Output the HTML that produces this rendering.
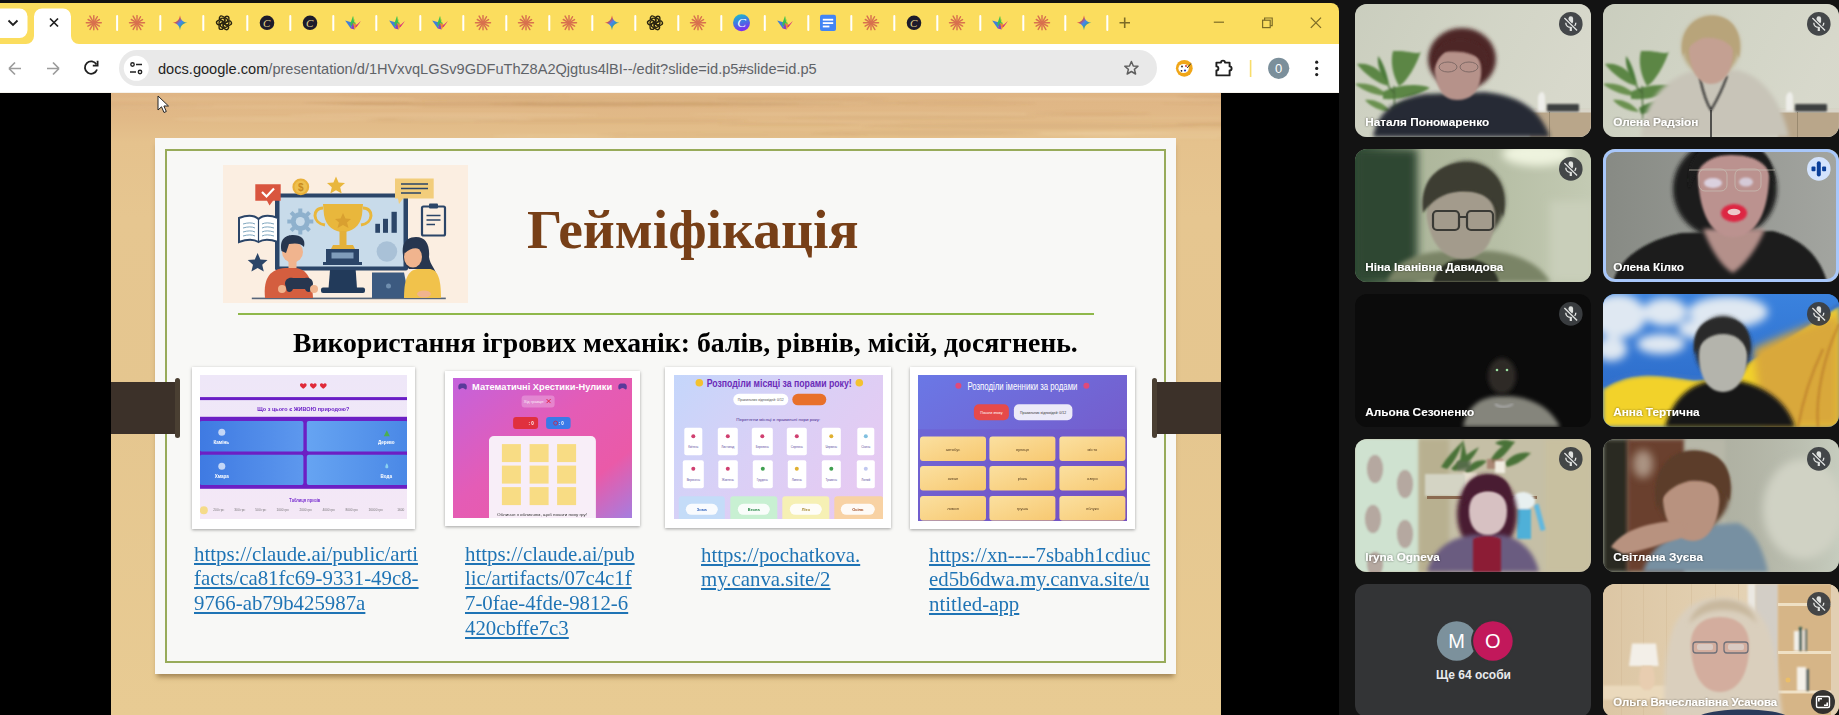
<!DOCTYPE html>
<html><head><meta charset="utf-8">
<style>
*{margin:0;padding:0;box-sizing:border-box}
html,body{width:1839px;height:715px;overflow:hidden;background:#131313;font-family:"Liberation Sans",sans-serif;position:relative}
.abs{position:absolute}
/* browser */
#browser{position:absolute;left:0;top:0;width:1339px;height:715px;background:#000;overflow:hidden}
#topblack{position:absolute;left:0;top:0;width:1339px;height:3px;background:#111}
#tabs{position:absolute;left:0;top:3px;width:1339px;height:41px;background:#fbdd5e;border-top-right-radius:10px}
#toolbar{position:absolute;left:0;top:44px;width:1339px;height:49px;background:#fff;border-bottom:1px solid #e8e3d8}
.sep{position:absolute;top:15px;width:2px;height:16px;background:#fff;border-radius:1px}
.ic{position:absolute;top:11px;width:20px;height:20px}
#omni{position:absolute;left:119px;top:6px;width:1037px;height:36px;border-radius:18px;background:#e9e9e9}
#url{position:absolute;left:158px;top:61px;font-size:14.6px;color:#5f6368;white-space:nowrap;letter-spacing:0}
#url b{font-weight:normal;color:#1f1f1f}
/* slide */
#slide{position:absolute;left:111px;top:93px;width:1110px;height:622px;overflow:hidden;
 background:linear-gradient(180deg,#dfb585 0%,#e1b987 4%,#e5c28d 8%,#e6c690 20%,#e5c68f 50%,#e8cb93 100%)}
#paper{position:absolute;left:44px;top:45px;width:1021px;height:536px;background:#f8f8f6;box-shadow:0 5px 5px -2px rgba(90,60,20,.5)}
#frame{position:absolute;left:10px;top:11px;width:1001px;height:514px;border:2px solid #98ab5a}
.clip{position:absolute;top:288px;width:69px;height:53px;background:#3c3129}
.thumb{position:absolute;background:#fff;box-shadow:0 1px 3px rgba(0,0,0,.35)}
.inner{position:absolute;overflow:hidden}
.link{position:absolute;font-family:"Liberation Serif",serif;font-size:20.85px;line-height:24.8px;color:#1f74b5;text-decoration:underline;text-decoration-thickness:1.5px;text-underline-offset:2px;white-space:nowrap}
/* meet tiles */
.tile{position:absolute;width:236px;height:133px;border-radius:10px;overflow:hidden}
.name{position:absolute;left:10px;bottom:10px;color:#fff;font-weight:bold;font-size:12.5px;text-shadow:0 0 3px rgba(0,0,0,.6);white-space:nowrap}
.mute{position:absolute;right:9px;top:7px;width:26px;height:26px;border-radius:50%;background:rgba(60,64,67,.85)}
</style></head><body>
<div id="browser">
 <!--CHROME--><svg class="abs" style="left:0;top:0" width="1339" height="93" viewBox="0 0 1339 93">
<defs>
<linearGradient id="gem" x1="0" y1="0" x2="1" y2="1"><stop offset="0" stop-color="#f0a030"/><stop offset=".3" stop-color="#e94235"/><stop offset=".5" stop-color="#4285f4"/><stop offset=".8" stop-color="#34a853"/></linearGradient>
<linearGradient id="cva" x1="0" y1="0" x2="0.3" y2="1"><stop offset="0" stop-color="#18c3c9"/><stop offset=".5" stop-color="#3c7fe0"/><stop offset="1" stop-color="#7b2ff0"/></linearGradient>
<g id="iA" stroke="#d8714e" stroke-width="1.45" stroke-linecap="round"><line x1="0" y1="0" x2="7.50" y2="0.00"/><line x1="0" y1="0" x2="5.63" y2="3.25"/><line x1="0" y1="0" x2="3.90" y2="6.75"/><line x1="0" y1="0" x2="0.00" y2="7.00"/><line x1="0" y1="0" x2="-3.80" y2="6.58"/><line x1="0" y1="0" x2="-5.89" y2="3.40"/><line x1="0" y1="0" x2="-7.50" y2="0.00"/><line x1="0" y1="0" x2="-5.72" y2="-3.30"/><line x1="0" y1="0" x2="-3.90" y2="-6.75"/><line x1="0" y1="0" x2="-0.00" y2="-7.20"/><line x1="0" y1="0" x2="3.50" y2="-6.06"/><line x1="0" y1="0" x2="5.54" y2="-3.20"/></g>
<path id="iG" d="M0,-7.5 C0.8,-2.5 2.5,-0.8 7.5,0 C2.5,0.8 0.8,2.5 0,7.5 C-0.8,2.5 -2.5,0.8 -7.5,0 C-2.5,-0.8 -0.8,-2.5 0,-7.5Z" fill="url(#gem)"/>
<g id="iO" fill="none" stroke="#2a2410" stroke-width="1.35"><rect x="0.9" y="-6.6" width="4" height="8.8" rx="2" transform="rotate(0)"/><rect x="0.9" y="-6.6" width="4" height="8.8" rx="2" transform="rotate(60)"/><rect x="0.9" y="-6.6" width="4" height="8.8" rx="2" transform="rotate(120)"/><rect x="0.9" y="-6.6" width="4" height="8.8" rx="2" transform="rotate(180)"/><rect x="0.9" y="-6.6" width="4" height="8.8" rx="2" transform="rotate(240)"/><rect x="0.9" y="-6.6" width="4" height="8.8" rx="2" transform="rotate(300)"/></g>
<g id="iC"><circle r="7.3" fill="#1d1b2b"/><text x="-0.3" y="4" font-family="Liberation Serif" font-style="italic" font-size="11" fill="#e8d890" text-anchor="middle">C</text></g>
<g id="iK" transform="scale(1.12)"><path d="M-7,-2 L-2,5 L0,0Z" fill="#3f7fd8"/><path d="M0,-6 L-2.5,1 L0,5 L2.5,1Z" fill="#38c050"/><path d="M0,-6 L2.5,1 L1,-1Z" fill="#f0e040"/><path d="M-2,5 L0,0 L1.5,6Z" fill="#8a40c0"/><path d="M1.5,6 L0,0 L4,2Z" fill="#f08a30"/><path d="M2,3 L7,-1.5 L6,0 L3,4Z" fill="#d83080"/></g>
<g id="iV"><circle r="8.5" fill="url(#cva)"/><text x="0" y="4.5" font-family="Liberation Serif" font-style="italic" font-size="13" fill="#fff" text-anchor="middle">C</text></g>
<g id="iD"><rect x="-8" y="-8" width="16" height="16.3" rx="2" fill="#4285f4"/><rect x="-5.2" y="-4" width="10.4" height="1.8" fill="#fff"/><rect x="-5.2" y="-0.6" width="10.4" height="1.8" fill="#fff"/><rect x="-5.2" y="2.8" width="6.6" height="1.8" fill="#fff"/></g>
</defs>
<rect x="0" y="0" width="1339" height="93" fill="#111"/>
<path d="M0,3 H1331 A8,8 0 0 1 1339,11 V93 H0Z" fill="#fbdd5e"/>
<rect x="0" y="44" width="1339" height="49" fill="#fff"/>
<rect x="0" y="92.5" width="1339" height="1" fill="#ece6da"/>
<rect x="-10" y="8.5" width="37.5" height="29.5" rx="8" fill="#fff"/>
<path d="M8.5,20.5 L13,25 L17.5,20.5" fill="none" stroke="#1f1f1f" stroke-width="1.8"/>
<path d="M26,44 A8,8 0 0 0 34,36 V16.5 A8,8 0 0 1 42,8.5 H63 A8,8 0 0 1 71,16.5 V36 A8,8 0 0 0 79,44Z" fill="#fff"/>
<path d="M50,18.5 L58,26.5 M58,18.5 L50,26.5" stroke="#1f1f1f" stroke-width="1.7"/>
<rect x="116.1" y="15" width="2" height="16" rx="1" fill="#fff"/><rect x="159.3" y="15" width="2" height="16" rx="1" fill="#fff"/><rect x="202.3" y="15" width="2" height="16" rx="1" fill="#fff"/><rect x="246.3" y="15" width="2" height="16" rx="1" fill="#fff"/><rect x="289.3" y="15" width="2" height="16" rx="1" fill="#fff"/><rect x="332.3" y="15" width="2" height="16" rx="1" fill="#fff"/><rect x="375.3" y="15" width="2" height="16" rx="1" fill="#fff"/><rect x="419.3" y="15" width="2" height="16" rx="1" fill="#fff"/><rect x="462.3" y="15" width="2" height="16" rx="1" fill="#fff"/><rect x="505.3" y="15" width="2" height="16" rx="1" fill="#fff"/><rect x="548.3" y="15" width="2" height="16" rx="1" fill="#fff"/><rect x="591.3" y="15" width="2" height="16" rx="1" fill="#fff"/><rect x="634.3" y="15" width="2" height="16" rx="1" fill="#fff"/><rect x="677.3" y="15" width="2" height="16" rx="1" fill="#fff"/><rect x="720.3" y="15" width="2" height="16" rx="1" fill="#fff"/><rect x="763.8" y="15" width="2" height="16" rx="1" fill="#fff"/><rect x="807.3" y="15" width="2" height="16" rx="1" fill="#fff"/><rect x="850.3" y="15" width="2" height="16" rx="1" fill="#fff"/><rect x="893.3" y="15" width="2" height="16" rx="1" fill="#fff"/><rect x="936.3" y="15" width="2" height="16" rx="1" fill="#fff"/><rect x="979.3" y="15" width="2" height="16" rx="1" fill="#fff"/><rect x="1022.3" y="15" width="2" height="16" rx="1" fill="#fff"/><rect x="1064.3" y="15" width="2" height="16" rx="1" fill="#fff"/><rect x="1106.3" y="15" width="2" height="16" rx="1" fill="#fff"/>
<use href="#iA" x="93.8" y="22.8"/><use href="#iA" x="137" y="22.8"/><use href="#iG" x="180" y="22.8"/><use href="#iO" x="224" y="22.8"/><use href="#iC" x="267" y="22.8"/><use href="#iC" x="310" y="22.8"/><use href="#iK" x="353" y="22.8"/><use href="#iK" x="397" y="22.8"/><use href="#iK" x="440" y="22.8"/><use href="#iA" x="483" y="22.8"/><use href="#iA" x="526" y="22.8"/><use href="#iA" x="569" y="22.8"/><use href="#iG" x="612" y="22.8"/><use href="#iO" x="655" y="22.8"/><use href="#iA" x="698" y="22.8"/><use href="#iV" x="741.5" y="22.8"/><use href="#iK" x="785" y="22.8"/><use href="#iD" x="828" y="22.8"/><use href="#iA" x="871" y="22.8"/><use href="#iC" x="914" y="22.8"/><use href="#iA" x="957" y="22.8"/><use href="#iK" x="1000" y="22.8"/><use href="#iA" x="1042" y="22.8"/><use href="#iG" x="1084" y="22.8"/>
<path d="M1119.5,22.8 H1130 M1124.7,17.5 V28" stroke="#7d6c26" stroke-width="1.6"/>
<path d="M1213.8,22.2 H1224" stroke="#7d6c26" stroke-width="1.2"/>
<rect x="1262.6" y="20.2" width="7.6" height="7.4" fill="none" stroke="#7d6c26" stroke-width="1.2"/>
<path d="M1264.6,20.2 V18 H1272.2 V25.6 H1270.2" fill="none" stroke="#7d6c26" stroke-width="1.2"/>
<path d="M1310.8,17.6 L1321,27.9 M1321,17.6 L1310.8,27.9" stroke="#7d6c26" stroke-width="1.3"/>
<rect x="119" y="50" width="1038" height="36" rx="18" fill="#e9e9e9"/>
<circle cx="136.3" cy="68.3" r="12.5" fill="#fff"/>
<path d="M9,68.5 H21 M9,68.5 L15,62.5 M9,68.5 L15,74.5" fill="none" stroke="#9c9c9c" stroke-width="1.7" transform="translate(0,-0)"/>
<path d="M47,68.5 H59 M59,68.5 L53,62.5 M59,68.5 L53,74.5" fill="none" stroke="#9c9c9c" stroke-width="1.7"/>
<path d="M96.5,64.5 A6.2,6.2 0 1 0 97,69.5" fill="none" stroke="#1f1f1f" stroke-width="1.8"/>
<path d="M97.6,60.8 V65.6 H92.8" fill="none" stroke="#1f1f1f" stroke-width="1.8"/>
<circle cx="132.5" cy="64.5" r="1.7" fill="none" stroke="#222" stroke-width="1.4"/>
<path d="M136,64.5 H142 M130,72 H136" stroke="#222" stroke-width="1.5"/>
<circle cx="140" cy="72" r="1.7" fill="none" stroke="#222" stroke-width="1.4"/>
<path d="M1131.4,61.5 L1133.3,66 L1138,66.3 L1134.4,69.4 L1135.6,74 L1131.4,71.5 L1127.2,74 L1128.4,69.4 L1124.8,66.3 L1129.5,66Z" fill="none" stroke="#5f5f5f" stroke-width="1.5" stroke-linejoin="round"/>
<circle cx="1184.3" cy="68.3" r="8.4" fill="#f0a618"/>
<ellipse cx="1183.6" cy="68.5" rx="5.2" ry="4.6" fill="#fff"/>
<circle cx="1182" cy="66.5" r="1" fill="#333"/><circle cx="1185" cy="70.5" r="1.1" fill="#2040c0"/><circle cx="1181.5" cy="70.8" r="0.9" fill="#222"/><circle cx="1186" cy="66" r="0.9" fill="#d02020"/>
<path d="M1187,68 L1191,63.5" stroke="#333" stroke-width="1"/>
<path d="M1216.4,62.6 H1221 A2,2 0 0 1 1225,62.6 H1229.6 V66.4 A2,2 0 0 1 1229.6,70.4 V75.4 H1216.4 V70.4 A2,2 0 0 0 1216.4,66.4Z" fill="none" stroke="#1f1f1f" stroke-width="1.9" stroke-linejoin="round"/>
<rect x="1249.8" y="60" width="1.6" height="17" fill="#f8dd6a"/>
<circle cx="1278.7" cy="68.3" r="10.6" fill="#7b8f9b"/>
<text x="1278.7" y="73" font-family="Liberation Sans" font-size="13" fill="#fff" text-anchor="middle">0</text>
<circle cx="1316.7" cy="62.2" r="1.6" fill="#1f1f1f"/><circle cx="1316.7" cy="68.4" r="1.6" fill="#1f1f1f"/><circle cx="1316.7" cy="74.6" r="1.6" fill="#1f1f1f"/>
</svg>
 <div id="url"><b>docs.google.com</b>/presentation/d/1HVxvqLGSv9GDFuThZ8A2Qjgtus4lBI--/edit?slide=id.p5#slide=id.p5</div>
 <svg class="abs" style="left:157px;top:95px;z-index:5" width="14" height="20" viewBox="0 0 14 20"><path d="M1,1 L1,15 L4.5,11.8 L7,17.5 L9.3,16.5 L6.9,11 L11.5,11Z" fill="#fff" stroke="#222" stroke-width="1"/></svg>
<!--/CHROME-->
 <div id="slide">
  <svg class="abs" style="left:0;top:0" width="1110" height="622"><defs><filter id="wb"><feGaussianBlur stdDeviation="1"/></filter></defs><g filter="url(#wb)"><ellipse cx="766" cy="21" rx="189" ry="2.0" fill="#fff0d0" opacity="0.09"/><ellipse cx="664" cy="10" rx="144" ry="2.6" fill="#b07a40" opacity="0.07"/><ellipse cx="1034" cy="6" rx="154" ry="1.3" fill="#fff0d0" opacity="0.12"/><ellipse cx="718" cy="29" rx="74" ry="1.2" fill="#fff0d0" opacity="0.05"/><ellipse cx="247" cy="10" rx="55" ry="2.0" fill="#b07a40" opacity="0.11"/><ellipse cx="800" cy="24" rx="125" ry="2.4" fill="#b07a40" opacity="0.07"/><ellipse cx="1281" cy="44" rx="176" ry="2.5" fill="#b07a40" opacity="0.07"/><ellipse cx="150" cy="14" rx="165" ry="1.9" fill="#fff0d0" opacity="0.08"/><ellipse cx="975" cy="42" rx="50" ry="1.6" fill="#fff0d0" opacity="0.08"/><ellipse cx="442" cy="43" rx="61" ry="2.3" fill="#fff0d0" opacity="0.07"/><ellipse cx="497" cy="6" rx="195" ry="2.6" fill="#b07a40" opacity="0.07"/><ellipse cx="142" cy="6" rx="170" ry="1.5" fill="#fff0d0" opacity="0.08"/><ellipse cx="855" cy="10" rx="70" ry="2.4" fill="#b07a40" opacity="0.08"/><ellipse cx="422" cy="11" rx="196" ry="2.6" fill="#b07a40" opacity="0.11"/><ellipse cx="555" cy="11" rx="178" ry="2.4" fill="#b07a40" opacity="0.12"/><ellipse cx="378" cy="11" rx="166" ry="1.8" fill="#b07a40" opacity="0.06"/><ellipse cx="692" cy="6" rx="86" ry="2.3" fill="#b07a40" opacity="0.08"/><ellipse cx="621" cy="42" rx="136" ry="2.8" fill="#b07a40" opacity="0.06"/><ellipse cx="977" cy="40" rx="87" ry="1.5" fill="#fff0d0" opacity="0.12"/><ellipse cx="1232" cy="10" rx="182" ry="2.3" fill="#b07a40" opacity="0.06"/><ellipse cx="1151" cy="4" rx="86" ry="2.5" fill="#b07a40" opacity="0.11"/><ellipse cx="331" cy="27" rx="76" ry="2.5" fill="#b07a40" opacity="0.07"/><ellipse cx="1074" cy="25" rx="142" ry="1.7" fill="#fff0d0" opacity="0.06"/><ellipse cx="343" cy="3" rx="117" ry="1.3" fill="#b07a40" opacity="0.08"/><ellipse cx="164" cy="26" rx="104" ry="2.8" fill="#fff0d0" opacity="0.10"/><ellipse cx="678" cy="31" rx="71" ry="1.3" fill="#b07a40" opacity="0.11"/><ellipse cx="1118" cy="31" rx="53" ry="2.3" fill="#b07a40" opacity="0.10"/><ellipse cx="1171" cy="15" rx="61" ry="2.2" fill="#fff0d0" opacity="0.11"/><ellipse cx="920" cy="33" rx="169" ry="2.8" fill="#b07a40" opacity="0.10"/><ellipse cx="1067" cy="40" rx="113" ry="2.6" fill="#fff0d0" opacity="0.09"/><ellipse cx="500" cy="28" rx="137" ry="2.3" fill="#b07a40" opacity="0.09"/><ellipse cx="1124" cy="44" rx="159" ry="1.9" fill="#fff0d0" opacity="0.09"/><ellipse cx="977" cy="21" rx="63" ry="2.6" fill="#b07a40" opacity="0.09"/><ellipse cx="333" cy="22" rx="155" ry="2.1" fill="#fff0d0" opacity="0.11"/><ellipse cx="9" cy="13" rx="95" ry="2.4" fill="#b07a40" opacity="0.06"/><ellipse cx="815" cy="40" rx="116" ry="2.8" fill="#b07a40" opacity="0.10"/><ellipse cx="592" cy="10" rx="171" ry="2.8" fill="#fff0d0" opacity="0.08"/><ellipse cx="353" cy="26" rx="70" ry="2.1" fill="#fff0d0" opacity="0.11"/><ellipse cx="1141" cy="32" rx="92" ry="1.5" fill="#b07a40" opacity="0.07"/><ellipse cx="545" cy="11" rx="144" ry="2.1" fill="#b07a40" opacity="0.11"/></g></svg>
  <div id="paper">
   <div id="frame"></div>
  </div>

  <svg class="abs" style="left:111.7px;top:72.4px" width="245" height="138" viewBox="0 0 245 138">
<rect width="245" height="138" fill="#fbeee1"/>
<rect x="28.8" y="132.6" width="194" height="1.6" fill="#56657a"/>
<rect x="52" y="28.4" width="133" height="77" rx="2" fill="#2b4568"/>
<rect x="56.5" y="32.5" width="124" height="69" fill="#c8dbea"/>
<path d="M107,105 H132.7 L134,123.5 H105.5Z" fill="#223a5a"/>
<rect x="98" y="122.5" width="44" height="5.5" rx="2" fill="#223a5a"/>
<g fill="#8fb1cd"><circle cx="77.3" cy="56.5" r="9.5"/><g stroke="#8fb1cd" stroke-width="4"><path d="M77.3,43.5 V69.5 M64.3,56.5 H90.3 M68.1,47.3 L86.5,65.7 M86.5,47.3 L68.1,65.7"/></g><circle cx="77.3" cy="56.5" r="4.5" fill="#c8dbea"/></g>
<path d="M100,39 H140 L139,50 C137,62 128,67 120,67 C112,67 103,62 101,50Z" fill="#e9b73c"/>
<path d="M100,43 C89,43 89,58 102,60 M140,43 C151,43 151,58 138,60" fill="none" stroke="#e9b73c" stroke-width="3"/>
<path d="M120,48 L122.5,53.5 L128,54 L124,57.5 L125.5,63 L120,60 L114.5,63 L116,57.5 L112,54 L117.5,53.5Z" fill="#d9a030"/>
<rect x="116.5" y="66" width="7" height="14" fill="#e4b13a"/>
<path d="M110,80 H130 L132,84 H108Z" fill="#e4b13a"/>
<rect x="103" y="84" width="33" height="14" fill="#2b4568"/>
<rect x="108.5" y="87.5" width="22" height="6" fill="#7f9cba"/>
<rect x="100" y="97" width="39" height="3" fill="#2b4568"/>
<g fill="#2b4568"><rect x="152.3" y="58.8" width="4.7" height="9"/><rect x="160" y="53.8" width="5" height="14"/><rect x="168.5" y="46.8" width="5.3" height="21"/></g>
<circle cx="163.9" cy="86.5" r="10.3" fill="#a9c1d7"/>
<path d="M32.3,19.2 H57.7 V35.8 H50 L46.5,40.5 L44,35.8 H32.3Z" fill="#d9553f" transform="translate(0,0)"/>
<path d="M39,27 L43.5,31.5 L51,23.5" fill="none" stroke="#fff" stroke-width="2.2"/>
<circle cx="77.8" cy="21.9" r="8.4" fill="#e8b03a"/><circle cx="77.8" cy="21.9" r="6.3" fill="#eec04f"/>
<text x="77.8" y="26" font-family="Liberation Sans" font-size="10" font-weight="bold" fill="#c88a20" text-anchor="middle">$</text>
<path d="M113,11.5 L115.6,17.5 L122,18 L117.2,22.2 L118.7,28.5 L113,25.2 L107.3,28.5 L108.8,22.2 L104,18 L110.4,17.5Z" fill="#e9b73c"/>
<path d="M172,13.4 H210.7 V33.5 H180 L176,39 L175,33.5 H172Z" fill="#f2cd7b"/>
<g stroke="#2b4568" stroke-width="1.3"><path d="M178,19 H205 M178,23.5 H205 M178,28 H198"/></g>
<rect x="199" y="41.5" width="23" height="29" rx="1.5" fill="#fbeee1" stroke="#2b4568" stroke-width="2.2"/>
<rect x="206" y="38.5" width="9" height="5" rx="1" fill="#2b4568"/>
<g stroke="#2b4568" stroke-width="1.4"><path d="M203.5,50.5 H217.5 M203.5,55 H217.5 M203.5,59.5 H212"/></g>
<path d="M16,53 C24,50 31,50 35.5,54 C40,50 47,50 55,53 V77 C47,74 40,74 35.5,77 C31,74 24,74 16,77Z" fill="#fff" stroke="#2b4568" stroke-width="2"/>
<path d="M35.5,54 V77" stroke="#2b4568" stroke-width="1.2"/>
<g stroke="#6f9bb5" stroke-width="0.9" fill="none"><path d="M20,59 C25,57.5 29,57.5 32,59 M20,63 C25,61.5 29,61.5 32,63 M20,67 C25,65.5 29,65.5 32,67 M20,71 C25,69.5 29,69.5 32,71 M39,59 C42,57.5 46,57.5 51,59 M39,63 C42,61.5 46,61.5 51,63 M39,67 C42,65.5 46,65.5 51,67 M39,71 C42,69.5 46,69.5 51,71"/></g>
<path d="M34.6,88 L37.4,94.5 L44.5,95 L39.2,99.8 L40.8,106.6 L34.6,103 L28.4,106.6 L30,99.8 L24.7,95 L31.8,94.5Z" fill="#2b4568"/>
<path d="M42,133 C40,112 48,104 62,103 H72 C84,104 89,113 90,133Z" fill="#d45e3f"/>
<circle cx="69.5" cy="87" r="10.5" fill="#f0b48e"/>
<rect x="65.5" y="95" width="8" height="8" fill="#f0b48e"/>
<path d="M58.5,86 C56,73 64,70 70,70 C78,70 83,74 81,82 C78,78 72,78 66,79 L63,88Z" fill="#27364f"/>
<path d="M62,119 C62,114 66,112 70,113 H82 C86,112 90,114 90,119 L88,126 C86,128 83,127 82,124 H70 C69,127 66,128 64,126Z" fill="#27364f"/>
<circle cx="59" cy="124" r="4" fill="#f0b48e"/><circle cx="91" cy="124" r="4" fill="#f0b48e"/>
<path d="M149,107.5 H181 L186,133 H149Z" fill="#3c5a80"/>
<circle cx="165.5" cy="121" r="2.5" fill="#6f8eae"/>
<path d="M180,90 C178,77 185,72 193,72 C203,72 207,80 206,92 C207,100 213,104 214,112 C206,111 201,108 199,104 L186,104 C182,100 180,96 180,90Z" fill="#27364f"/>
<path d="M181,133 C181,112 186,104 196,104 H206 C214,104 218,112 218,133Z" fill="#f1c24b"/>
<ellipse cx="190" cy="92" rx="9" ry="10.5" fill="#f0b48e"/>
<path d="M181,86 C181,77 188,73 195,75 C200,77 202,82 201,86 C195,82 188,82 182,88Z" fill="#27364f"/>
<ellipse cx="201" cy="129" rx="7" ry="3.5" fill="#f0b48e"/>
</svg>

  <div class="abs" id="title" style="left:416px;top:106px;font-family:'Liberation Serif',serif;font-weight:bold;font-size:55.6px;line-height:60px;color:#773f17;white-space:nowrap">Гейміфікація</div>
  <div class="abs" style="left:127px;top:220px;width:856px;height:2px;background:#8fb84a"></div>
  <div class="abs" id="sub" style="left:182px;top:234px;font-family:'Liberation Serif',serif;font-weight:bold;font-size:27.74px;line-height:32px;color:#000;white-space:nowrap">Використання ігрових механік: балів, рівнів, місій, досягнень.</div>
  <div class="clip" style="left:0;top:288.7px;width:68.7px;height:52.5px"></div><div class="abs" style="left:64px;top:285px;width:5px;height:60px;border-radius:2.5px;background:#4a3f32"></div>
  <div class="clip" style="left:1041px;top:288.7px;width:69px;height:52.5px"></div><div class="abs" style="left:1040.5px;top:285px;width:5px;height:60px;border-radius:2.5px;background:#4a3f32"></div>
  <div class="thumb" style="left:80.8px;top:274.3px;width:223px;height:161.4px"></div>
  <svg class="abs" style="left:89.2px;top:281.7px" width="206.8" height="144.3" viewBox="200.2 374.7 206.8 144.3">
   <defs><linearGradient id="t1b" x1="0" y1="0" x2="1" y2="0"><stop offset="0" stop-color="#3f7ae2"/><stop offset="1" stop-color="#5d98ee"/></linearGradient><linearGradient id="t1c" x1="0" y1="0" x2="1" y2="0"><stop offset="0" stop-color="#66a4f2"/><stop offset="1" stop-color="#4a88e6"/></linearGradient>
   <linearGradient id="t1bg" x1="0" y1="0" x2="0" y2="1"><stop offset="0" stop-color="#eee7f8"/><stop offset="1" stop-color="#f4e8f6"/></linearGradient></defs>
   <rect x="200" y="374" width="208" height="146" fill="url(#t1bg)"/>
   <g fill="#e02a3a"><path d="M300.5,384 c-1.2,-1.8 -3.6,-1 -3.3,0.9 c0.2,1.3 1.8,2.5 3.3,3.6 c1.5,-1.1 3.1,-2.3 3.3,-3.6 c0.3,-1.9 -2.1,-2.7 -3.3,-0.9z" transform="translate(3,0) scale(1)"/><path d="M300.5,384 c-1.2,-1.8 -3.6,-1 -3.3,0.9 c0.2,1.3 1.8,2.5 3.3,3.6 c1.5,-1.1 3.1,-2.3 3.3,-3.6 c0.3,-1.9 -2.1,-2.7 -3.3,-0.9z" transform="translate(13,0)"/><path d="M300.5,384 c-1.2,-1.8 -3.6,-1 -3.3,0.9 c0.2,1.3 1.8,2.5 3.3,3.6 c1.5,-1.1 3.1,-2.3 3.3,-3.6 c0.3,-1.9 -2.1,-2.7 -3.3,-0.9z" transform="translate(23,0)"/></g>
   <rect x="200" y="396.8" width="208" height="3" fill="#6a1ec6"/>
   <text x="303.5" y="410.5" font-family="Liberation Sans" font-weight="bold" font-size="5" fill="#6a1ec6" text-anchor="middle" textLength="92" lengthAdjust="spacingAndGlyphs">Що з цього є ЖИВОЮ природою?</text>
   <rect x="200" y="416.5" width="208" height="72" fill="#6c1fc4"/>
   <rect x="200" y="420.6" width="103.6" height="30.6" rx="2" fill="url(#t1b)"/>
   <rect x="307" y="420.6" width="101" height="30.6" rx="2" fill="url(#t1c)"/>
   <rect x="200" y="454.5" width="103.6" height="30.2" rx="2" fill="url(#t1b)"/>
   <rect x="307" y="454.5" width="101" height="30.2" rx="2" fill="url(#t1c)"/>
   <g font-family="Liberation Sans" font-weight="bold" font-size="4.6" fill="#fff" text-anchor="middle"><text x="221.5" y="444">Камінь</text><text x="386.5" y="444">Дерево</text><text x="222" y="477.5">Хмара</text><text x="386.5" y="477.5">Вода</text></g><g fill="#fff" opacity=".85">
   <circle cx="222" cy="432" r="3.5" opacity=".8"/><circle cx="222" cy="466" r="3.5" opacity=".8"/></g>
   <path d="M387,430 L390,436 H384Z" fill="#4caf50"/><path d="M387,463 C385,466 385,468 387,468 C389,468 389,466 387,463Z" fill="#8ad0f0"/>
   <text x="305" y="501.5" font-family="Liberation Sans" font-weight="bold" font-size="4.5" fill="#7a30d0" text-anchor="middle" textLength="31" lengthAdjust="spacingAndGlyphs">Таблиця призів</text>
   <circle cx="204" cy="510" r="4" fill="#f5d76e" opacity=".8"/>
   <g font-family="Liberation Sans" font-size="3.2" fill="#555" opacity=".8" text-anchor="middle"><text x="219" y="511">200 грн</text><text x="240" y="511">300 грн</text><text x="261" y="511">500 грн</text><text x="283" y="511">1000 грн</text><text x="306" y="511">2000 грн</text><text x="329" y="511">4000 грн</text><text x="352" y="511">8000 грн</text><text x="376" y="511">16000 грн</text><text x="401" y="511">1600</text></g>
  </svg>

  <div class="thumb" style="left:334.3px;top:278px;width:194.7px;height:155.4px"></div>
  <svg class="abs" style="left:342.4px;top:285.4px" width="178.6" height="139.6" viewBox="453.4 378.4 178.6 139.6">
   <defs><linearGradient id="t2g" x1="0" y1="0" x2="1" y2="1"><stop offset="0" stop-color="#c462dc"/><stop offset=".45" stop-color="#e45cb6"/><stop offset=".75" stop-color="#ea5aa8"/><stop offset="1" stop-color="#a47ee0"/></linearGradient></defs>
   <rect x="453" y="378" width="180" height="141" fill="url(#t2g)"/>
   <g fill="#5a3a9a"><path d="M459,389.5 C458,385 460,383.5 463,384 C466,383.5 468,385 467,389.5 C466,390.5 465,389 463,388.5 C461,389 460,390.5 459,389.5Z"/><path d="M619,389.5 C618,385 620,383.5 623,384 C626,383.5 628,385 627,389.5 C626,390.5 625,389 623,388.5 C621,389 620,390.5 619,389.5Z"/></g>
   <text x="542.5" y="390.5" font-family="Liberation Sans" font-weight="bold" font-size="9.2" fill="#fff" text-anchor="middle" textLength="140" lengthAdjust="spacingAndGlyphs">Математичні Хрестики-Нулики</text>
   <rect x="522" y="396" width="33" height="12" rx="3" fill="#fff" opacity=".25"/>
   <text x="534.5" y="403.4" font-family="Liberation Sans" font-size="4" fill="#fff" opacity=".85" text-anchor="middle">Хід гравця:</text><path d="M547,399.5 L551,403.5 M551,399.5 L547,403.5" stroke="#e02040" stroke-width="1"/>
   <rect x="513.5" y="417.5" width="25" height="12" rx="3" fill="#e0303e"/><text x="529" y="425.5" font-family="Liberation Sans" font-weight="bold" font-size="4.5" fill="#fff">: 0</text>
   <rect x="546.5" y="417.5" width="24.5" height="12" rx="3" fill="#3a7ae8"/><circle cx="556" cy="423.5" r="2" fill="none" stroke="#d02040" stroke-width=".8"/><text x="559" y="425.5" font-family="Liberation Sans" font-weight="bold" font-size="4.5" fill="#fff">: 0</text>
   <rect x="489.3" y="436.4" width="107" height="90" rx="5" fill="#f8eef8"/>
   <g fill="#f8dc84"><rect x="502.3" y="444.5" width="19" height="18"/><rect x="530" y="444.5" width="19" height="18"/><rect x="557.5" y="444.5" width="19" height="18"/>
   <rect x="502.3" y="466" width="19" height="18"/><rect x="530" y="466" width="19" height="18"/><rect x="557.5" y="466" width="19" height="18"/>
   <rect x="502.3" y="487.5" width="19" height="18"/><rect x="530" y="487.5" width="19" height="18"/><rect x="557.5" y="487.5" width="19" height="18"/></g>
   <text x="542.5" y="516.5" font-family="Liberation Sans" font-size="3.6" fill="#333" text-anchor="middle" textLength="90" lengthAdjust="spacingAndGlyphs">Обличчя з обличчям, щоб почати нову гру!</text>
  </svg>

  <div class="thumb" style="left:554.4px;top:274.3px;width:225.8px;height:161px"></div>
  <svg class="abs" style="left:563.2px;top:281.7px" width="208.8" height="144.3" viewBox="674.2 374.7 208.8 144.3">
   <defs><linearGradient id="t3g" x1="0" y1="0" x2="1" y2="0.6"><stop offset="0" stop-color="#c4d6fb"/><stop offset=".5" stop-color="#d9d0f6"/><stop offset="1" stop-color="#e6caf2"/></linearGradient></defs>
   <rect x="674" y="374" width="210" height="146" fill="url(#t3g)"/>
   <circle cx="699.5" cy="382.5" r="3.8" fill="#f3c230"/><circle cx="859.5" cy="382.5" r="3.8" fill="#f3c230"/>
   <text x="779.4" y="386.6" font-family="Liberation Sans" font-weight="bold" font-size="10.6" fill="#6b2bb8" text-anchor="middle" textLength="145" lengthAdjust="spacingAndGlyphs">Розподіли місяці за порами року!</text>
   <rect x="733.5" y="393.5" width="55" height="11.5" rx="5.7" fill="#fff"/>
   <text x="761" y="400.8" font-family="Liberation Sans" font-size="3.4" fill="#555" text-anchor="middle" textLength="46" lengthAdjust="spacingAndGlyphs">Правильних відповідей: 0/12</text>
   <rect x="792.5" y="393.5" width="34" height="11.5" rx="5.7" fill="#e8702a"/>
   <text x="778.5" y="420.8" font-family="Liberation Sans" font-size="4.2" fill="#4a2a90" text-anchor="middle" textLength="84" lengthAdjust="spacingAndGlyphs">Перетягни місяці в правильні пори року:</text>
   <g fill="#fff"><rect x="684.5" y="427.5" width="18" height="27.5" rx="2"/><rect x="718" y="427.5" width="20" height="27.5" rx="2"/><rect x="752" y="427.5" width="21" height="27.5" rx="2"/><rect x="787" y="427.5" width="20" height="27.5" rx="2"/><rect x="822" y="427.5" width="19" height="27.5" rx="2"/><rect x="857.5" y="427.5" width="17" height="27.5" rx="2"/>
   <rect x="683" y="460" width="21" height="28" rx="2"/><rect x="718.5" y="460" width="19.5" height="28" rx="2"/><rect x="753" y="460" width="20" height="28" rx="2"/><rect x="788" y="460" width="18.5" height="28" rx="2"/><rect x="822" y="460" width="19" height="28" rx="2"/><rect x="857" y="460" width="18" height="28" rx="2"/></g>
   <g fill="#d04070"><circle cx="693.5" cy="436" r="2"/><circle cx="728" cy="436" r="2"/><circle cx="762.5" cy="436" r="2"/><circle cx="797" cy="436" r="2"/><circle cx="831.5" cy="436" r="2" fill="#e0b030"/><circle cx="866" cy="436" r="2" fill="#80c0e0"/>
   <circle cx="693.5" cy="468.5" r="2"/><circle cx="728" cy="468.5" r="2"/><circle cx="763" cy="468.5" r="2" fill="#40a050"/><circle cx="797" cy="468.5" r="2" fill="#e0b030"/><circle cx="831.5" cy="468.5" r="2" fill="#40a050"/><circle cx="866" cy="468.5" r="2" fill="#c0c8f0"/></g>
   <g font-family="Liberation Sans" font-size="3" fill="#5a4aa0" text-anchor="middle"><text x="693.5" y="448">Квітень</text><text x="728" y="448">Листопад</text><text x="762.5" y="448">Березень</text><text x="797" y="448">Серпень</text><text x="831.5" y="448">Червень</text><text x="866" y="448">Січень</text><text x="693.5" y="481">Вересень</text><text x="728" y="481">Жовтень</text><text x="762.5" y="481">Грудень</text><text x="797" y="481">Липень</text><text x="831.5" y="481">Травень</text><text x="866" y="481">Лютий</text></g>
   <rect x="679" y="496" width="46" height="25" rx="3" fill="#c4dcf8"/>
   <rect x="730.5" y="496" width="47" height="25" rx="3" fill="#c8f0d2"/>
   <rect x="782.5" y="496" width="47" height="25" rx="3" fill="#f6f0b4"/>
   <rect x="834.5" y="496" width="49" height="25" rx="3" fill="#f8d2a4"/>
   <g fill="#fff" opacity=".9"><rect x="686" y="503.5" width="32" height="11" rx="5.5"/><rect x="738" y="503.5" width="32" height="11" rx="5.5"/><rect x="790" y="503.5" width="32" height="11" rx="5.5"/><rect x="841" y="503.5" width="34" height="11" rx="5.5"/></g><g font-family="Liberation Sans" font-weight="bold" font-size="4" text-anchor="middle"><text x="702" y="510.5" fill="#3a6ac0">Зима</text><text x="754" y="510.5" fill="#2a8a4a">Весна</text><text x="806" y="510.5" fill="#a08020">Літо</text><text x="858" y="510.5" fill="#a04a20">Осінь</text></g>
  </svg>

  <div class="thumb" style="left:799.3px;top:274.3px;width:224.4px;height:161.4px"></div>
  <svg class="abs" style="left:806.6px;top:281.7px" width="209.4" height="146.7" viewBox="917.6 374.7 209.4 146.7">
   <defs><linearGradient id="t4g" x1="0" y1="0" x2="1" y2="1"><stop offset="0" stop-color="#6a78e6"/><stop offset="1" stop-color="#7a50c0"/></linearGradient>
   <linearGradient id="t4c" x1="0" y1="0" x2="1" y2="1"><stop offset="0" stop-color="#fbe0a0"/><stop offset="1" stop-color="#f7c870"/></linearGradient></defs>
   <rect x="917" y="374" width="211" height="148" fill="url(#t4g)"/>
   <circle cx="958" cy="385.5" r="3" fill="#e04a7a"/><circle cx="1086" cy="385.5" r="3" fill="#e04a7a"/>
   <text x="1022" y="389.5" font-family="Liberation Sans" font-size="10" fill="#fff" text-anchor="middle" textLength="110" lengthAdjust="spacingAndGlyphs">Розподіли іменники за родами</text>
   <rect x="973.5" y="404" width="35" height="16" rx="5" fill="#e64a4a"/>
   <rect x="1013.5" y="404" width="58.5" height="16" rx="5" fill="#eceaf8"/>
   <text x="1042.7" y="413.5" font-family="Liberation Sans" font-size="4" fill="#333" text-anchor="middle" textLength="46" lengthAdjust="spacingAndGlyphs">Правильних відповідей: 0/12</text><text x="991" y="413.5" font-family="Liberation Sans" font-size="3.6" fill="#fff" text-anchor="middle">Почати знову</text>
   <rect x="917.6" y="429" width="209.4" height="93" fill="#7050c4" opacity=".35"/>
   <g fill="url(#t4c)"><rect x="919.6" y="436.3" width="66" height="24.5" rx="3"/><rect x="989" y="436.3" width="66" height="24.5" rx="3"/><rect x="1059" y="436.3" width="66" height="24.5" rx="3"/>
   <rect x="919.6" y="465.6" width="66" height="24.5" rx="3"/><rect x="989" y="465.6" width="66" height="24.5" rx="3"/><rect x="1059" y="465.6" width="66" height="24.5" rx="3"/>
   <rect x="919.6" y="495.7" width="66" height="24.5" rx="3"/><rect x="989" y="495.7" width="66" height="24.5" rx="3"/><rect x="1059" y="495.7" width="66" height="24.5" rx="3"/></g>
   <g font-family="Liberation Sans" font-size="4" fill="#5a4020" text-anchor="middle"><text x="952.6" y="450.5">автобус</text><text x="1022" y="450.5">вулиця</text><text x="1092" y="450.5">місто</text><text x="952.6" y="479.8">океан</text><text x="1022" y="479.8">річка</text><text x="1092" y="479.8">озеро</text><text x="952.6" y="509.9">лимон</text><text x="1022" y="509.9">груша</text><text x="1092" y="509.9">яблуко</text></g>
  </svg>
  <div class="link" style="left:83px;top:448.5px">https://claude.ai/public/arti<br>facts/ca81fc69-9331-49c8-<br>9766-ab79b425987a</div>
  <div class="link" style="left:354px;top:448.5px">https://claude.ai/pub<br>lic/artifacts/07c4c1f<br>7-0fae-4fde-9812-6<br>420cbffe7c3</div>
  <div class="link" style="left:590px;top:449.5px">https://pochatkova.<br>my.canva.site/2</div>
  <div class="link" style="left:818px;top:449.5px">https://xn----7sbabh1cdiuc<br>ed5b6dwa.my.canva.site/u<br>ntitled-app</div>
 </div>
</div>
<!--TILES--><svg class="abs" style="left:1339px;top:0" width="500" height="715" viewBox="1339 0 500 715"><defs>
<filter id="b1" x="-20%" y="-20%" width="140%" height="140%"><feGaussianBlur stdDeviation="1"/></filter>
<filter id="b2" x="-20%" y="-20%" width="140%" height="140%"><feGaussianBlur stdDeviation="2"/></filter>
<filter id="b4" x="-30%" y="-30%" width="160%" height="160%"><feGaussianBlur stdDeviation="4"/></filter>
<filter id="ts" x="-10%" y="-30%" width="120%" height="160%"><feDropShadow dx="0" dy="0" stdDeviation="0.9" flood-color="#000" flood-opacity=".55"/></filter>
</defs><defs>
<linearGradient id="w1" x1="0" y1="0" x2="1" y2="0.3"><stop offset="0" stop-color="#c8ccbc" stop-opacity=".6"/><stop offset=".6" stop-color="#d6d8ca" stop-opacity=".6"/><stop offset="1" stop-color="#dcdcd0" stop-opacity=".7"/></linearGradient>
<linearGradient id="g3" x1="0" y1="0" x2="1" y2="0"><stop offset="0" stop-color="#2a4a32"/><stop offset=".3" stop-color="#a7b094" stop-opacity=".6"/><stop offset="1" stop-color="#c8ceb8" stop-opacity=".7"/></linearGradient>
<linearGradient id="g4" x1="0" y1="0" x2="1" y2="0"><stop offset="0" stop-color="#878a84"/><stop offset="1" stop-color="#a3a5a0"/></linearGradient>
<linearGradient id="g6" x1="0" y1="0" x2="0" y2="1"><stop offset="0" stop-color="#3a82de"/><stop offset="1" stop-color="#2a66c4"/></linearGradient>
<linearGradient id="g8" x1="0" y1="0" x2="1" y2="0"><stop offset="0" stop-color="#8a8070" stop-opacity="0"/><stop offset="1" stop-color="#c6ccbe"/></linearGradient>
<linearGradient id="g10" x1="0" y1="0" x2="1" y2="0"><stop offset="0" stop-color="#dcc6a4"/><stop offset=".6" stop-color="#e4d2b4"/><stop offset="1" stop-color="#dcc6a4"/></linearGradient>
</defs>
<rect x="1339" y="0" width="500" height="715" fill="#131313"/>
<clipPath id="c0"><rect x="0" y="0" width="236" height="133" rx="12"/></clipPath>
<g transform="translate(1355,4)"><g clip-path="url(#c0)"><rect width="236" height="133" fill="#cdd0c1"/>
<rect x="0" y="0" width="236" height="133" fill="url(#w1)"/>
<g fill="#5b8644" stroke="none" filter="url(#b1)">
<path d="M2,60 C15,58 28,66 35,82 C22,80 10,70 2,60Z"/>
<path d="M23,52 C28,58 32,70 34,80 C26,72 22,62 23,52Z" fill="#4c7a3a"/>
<path d="M38,47 C55,46 64,52 66,47 C62,60 52,78 44,82 C38,72 35,58 38,47Z"/>
<path d="M0,80 C15,78 25,84 34,92 C22,92 10,88 0,80Z" fill="#6a9150"/>
<path d="M28,88 C38,82 62,78 75,84 C62,92 45,96 28,95Z"/>
<path d="M10,96 C20,95 30,100 36,108 C25,107 16,103 10,96Z" fill="#6a9150"/>
<path d="M36,104 C45,98 55,96 68,98 C58,106 48,110 38,110Z" fill="#4c7a3a"/>
<path d="M39,82 L40,115 M40,90 L33,82" stroke="#4a6a3a" stroke-width="1.3" fill="none"/>
</g><rect x="175" y="106" width="62" height="28" fill="#b9a68a" filter="url(#b1)"/><rect x="175" y="105" width="62" height="3.5" fill="#d8d4c8"/>
<rect x="194" y="108" width="1" height="26" fill="#9a8a70"/>
<path d="M183,107 V94 C183,90 186,88 187,88 C188,88 190,90 190,94 V107Z" fill="#eeeeea" filter="url(#b1)"/>
<rect x="192" y="100" width="32" height="7.5" rx="1" fill="#3d3f40" filter="url(#b1)"/>
<path d="M18,133 C22,108 40,95 70,90 L130,88 C165,92 185,105 195,133Z" fill="#262a36" filter="url(#b2)"/>
<ellipse cx="107" cy="55" rx="34" ry="31" fill="#4d2626" filter="url(#b2)"/>
<path d="M80,70 C78,56 86,44 104,44 C122,44 128,58 126,72 C124,88 116,96 102,96 C88,96 82,84 80,70Z" fill="#b6928a" filter="url(#b1)"/>
<path d="M78,58 C80,40 95,34 110,36 C128,38 135,50 132,62 C124,50 108,46 90,48 C84,52 80,60 78,66Z" fill="#4d2626" filter="url(#b1)"/>
<g stroke="#6a5a58" stroke-width="0.9" fill="none" opacity=".8"><ellipse cx="93" cy="63" rx="9" ry="5"/><ellipse cx="114" cy="63" rx="9" ry="5"/></g>
<g transform="translate(215.8,19.9)"><circle r="11.8" fill="#3c3f42" fill-opacity=".95"/>
<g fill="none" stroke="#e0e2e0" stroke-width="1.4"><rect x="-2.3" y="-7.6" width="4.6" height="7.6" rx="2.3" fill="#e0e2e0" stroke="none"/><path d="M-5,-1.2 C-5,5 5,5 5,-1.2"/><path d="M0,3.8 V7.2" stroke-width="2.2"/><path d="M-7,-6.6 L6.6,6.8" stroke="#3c3f42" stroke-width="3"/><path d="M-6.4,-5.9 L6.3,6.5" stroke-width="1.4"/></g></g><text x="10.2" y="121.8" font-family="Liberation Sans" font-weight="bold" font-size="11.8" fill="#fff" filter="url(#ts)">Наталя Пономаренко</text></g></g>
<clipPath id="c1"><rect x="0" y="0" width="236" height="133" rx="12"/></clipPath>
<g transform="translate(1603,4)"><g clip-path="url(#c1)"><rect width="236" height="133" fill="#cdd0c1"/>
<rect x="0" y="0" width="236" height="133" fill="url(#w1)"/>
<g fill="#5b8644" stroke="none" filter="url(#b1)">
<path d="M2,60 C15,58 28,66 35,82 C22,80 10,70 2,60Z"/>
<path d="M23,52 C28,58 32,70 34,80 C26,72 22,62 23,52Z" fill="#4c7a3a"/>
<path d="M38,47 C55,46 64,52 66,47 C62,60 52,78 44,82 C38,72 35,58 38,47Z"/>
<path d="M0,80 C15,78 25,84 34,92 C22,92 10,88 0,80Z" fill="#6a9150"/>
<path d="M28,88 C38,82 62,78 75,84 C62,92 45,96 28,95Z"/>
<path d="M10,96 C20,95 30,100 36,108 C25,107 16,103 10,96Z" fill="#6a9150"/>
<path d="M36,104 C45,98 55,96 68,98 C58,106 48,110 38,110Z" fill="#4c7a3a"/>
<path d="M39,82 L40,115 M40,90 L33,82" stroke="#4a6a3a" stroke-width="1.3" fill="none"/>
</g><rect x="175" y="106" width="62" height="28" fill="#b9a68a" filter="url(#b1)"/><rect x="175" y="105" width="62" height="3.5" fill="#d8d4c8"/>
<rect x="194" y="108" width="1" height="26" fill="#9a8a70"/>
<path d="M183,107 V94 C183,90 186,88 187,88 C188,88 190,90 190,94 V107Z" fill="#eeeeea" filter="url(#b1)"/>
<rect x="192" y="100" width="32" height="7.5" rx="1" fill="#3d3f40" filter="url(#b1)"/>
<path d="M38,133 C40,104 56,78 86,68 L134,66 C160,72 178,96 186,133Z" fill="#c8c4b8" filter="url(#b2)"/>
<path d="M97,74 C100,88 104,100 108,106 C114,96 120,84 124,72" fill="none" stroke="#2a2a2a" stroke-width="2" filter="url(#b1)"/>
<path d="M108,106 V133" stroke="#2a2a2a" stroke-width="1.5"/>
<ellipse cx="108" cy="42" rx="29" ry="30" fill="#b8a47a" filter="url(#b2)"/>
<path d="M86,48 C85,34 94,30 108,30 C122,30 131,36 130,50 C129,68 121,80 108,80 C95,80 87,66 86,48Z" fill="#c4a092" filter="url(#b1)"/>
<path d="M80,52 C76,28 90,12 110,12 C128,12 140,26 136,54 C130,40 118,32 100,34 C90,38 84,44 80,52Z" fill="#b8a47a" filter="url(#b1)"/>
<g transform="translate(215.8,19.9)"><circle r="11.8" fill="#3c3f42" fill-opacity=".95"/>
<g fill="none" stroke="#e0e2e0" stroke-width="1.4"><rect x="-2.3" y="-7.6" width="4.6" height="7.6" rx="2.3" fill="#e0e2e0" stroke="none"/><path d="M-5,-1.2 C-5,5 5,5 5,-1.2"/><path d="M0,3.8 V7.2" stroke-width="2.2"/><path d="M-7,-6.6 L6.6,6.8" stroke="#3c3f42" stroke-width="3"/><path d="M-6.4,-5.9 L6.3,6.5" stroke-width="1.4"/></g></g><text x="10.2" y="121.8" font-family="Liberation Sans" font-weight="bold" font-size="11.8" fill="#fff" filter="url(#ts)">Олена Радзіон</text></g></g>
<clipPath id="c2"><rect x="0" y="0" width="236" height="133" rx="12"/></clipPath>
<g transform="translate(1355,149)"><g clip-path="url(#c2)"><rect width="236" height="133" fill="#b9c2a9"/>
<rect width="236" height="133" fill="url(#g3)"/>
<rect x="0" y="0" width="62" height="133" fill="#2e4630" filter="url(#b4)"/>
<ellipse cx="182" cy="5" rx="35" ry="12" fill="#eef3de" filter="url(#b4)"/>
<rect x="195" y="52" width="45" height="80" fill="#c9cfba" filter="url(#b4)"/>
<path d="M32,133 C40,112 60,104 90,102 L135,102 C160,104 185,114 195,133Z" fill="#7a8466" filter="url(#b2)"/>
<path d="M78,133 C82,118 92,110 110,110 C128,110 140,118 144,133Z" fill="#2e3328" filter="url(#b1)"/>
<ellipse cx="112" cy="52" rx="38" ry="40" fill="#3c3c32" filter="url(#b2)"/>
<path d="M72,70 C70,52 82,42 108,42 C132,42 142,54 140,72 C138,94 128,110 108,110 C88,110 76,94 72,70Z" fill="#a39b8c" filter="url(#b1)"/>
<path d="M68,64 C64,32 82,14 110,14 C138,14 154,36 148,68 C140,46 124,40 104,42 C88,44 76,52 68,64Z" fill="#3c3c32" filter="url(#b1)"/>
<g fill="none" stroke="#3a3a35" stroke-width="2.2"><rect x="78" y="62" width="26" height="19" rx="4"/><rect x="112" y="62" width="26" height="19" rx="4"/><path d="M104,68 H112"/></g>
<g transform="translate(215.8,19.9)"><circle r="11.8" fill="#3c3f42" fill-opacity=".95"/>
<g fill="none" stroke="#e0e2e0" stroke-width="1.4"><rect x="-2.3" y="-7.6" width="4.6" height="7.6" rx="2.3" fill="#e0e2e0" stroke="none"/><path d="M-5,-1.2 C-5,5 5,5 5,-1.2"/><path d="M0,3.8 V7.2" stroke-width="2.2"/><path d="M-7,-6.6 L6.6,6.8" stroke="#3c3f42" stroke-width="3"/><path d="M-6.4,-5.9 L6.3,6.5" stroke-width="1.4"/></g></g><text x="10.2" y="121.8" font-family="Liberation Sans" font-weight="bold" font-size="11.8" fill="#fff" filter="url(#ts)">Ніна Іванівна Давидова</text></g></g>
<clipPath id="c3"><rect x="0" y="0" width="236" height="133" rx="12"/></clipPath>
<g transform="translate(1603,149)"><g clip-path="url(#c3)"><rect width="236" height="133" fill="#8d908a"/>
<rect width="236" height="133" fill="url(#g4)"/>
<ellipse cx="122" cy="40" rx="52" ry="50" fill="#1b1c1b" filter="url(#b2)"/>
<path d="M10,133 C16,110 40,92 78,84 L170,82 C205,92 218,112 224,133Z" fill="#1b1d1b" filter="url(#b1)"/>
<path d="M100,80 C106,96 116,116 130,124 C144,114 156,96 162,80Z" fill="#b4908a" filter="url(#b2)"/>
<path d="M95,30 C93,8 106,-6 130,-6 C154,-6 168,8 166,32 C164,66 152,88 130,88 C108,88 97,64 95,30Z" fill="#bb928f" filter="url(#b1)"/>
<path d="M86,40 C82,10 98,-8 128,-8 C156,-8 172,8 172,36 C166,18 158,6 128,6 C104,6 94,18 86,40Z" fill="#1b1c1b" filter="url(#b1)"/>
<ellipse cx="110" cy="34" rx="9" ry="5" fill="#e6e6fa" opacity=".75" filter="url(#b1)"/><ellipse cx="143" cy="33" rx="7" ry="4.5" fill="#e0e2f6" opacity=".7" filter="url(#b1)"/>
<g fill="none" stroke="#c8c4b8" stroke-width="0.9" opacity=".75"><path d="M86,21 H172"/><rect x="96" y="20" width="28" height="22" rx="6"/><rect x="132" y="20" width="26" height="22" rx="6"/></g>
<ellipse cx="131" cy="64" rx="13" ry="9" fill="#dd2642" filter="url(#b1)"/>
<ellipse cx="131" cy="63" rx="6.5" ry="3.2" fill="#ecc8c8"/>
<g transform="translate(215.8,19.9)"><circle r="11.8" fill="#d3e3fd"/><rect x="-7.3" y="-2.3" width="4" height="4.6" rx="1" fill="#0a3f9a"/><rect x="-2" y="-7.6" width="4" height="15.2" rx="2" fill="#0a3f9a"/><rect x="3.3" y="-2.3" width="4" height="4.6" rx="1" fill="#0a3f9a"/></g>
<rect x="1.5" y="1.5" width="233" height="130" rx="10.5" fill="none" stroke="#a8c7fa" stroke-width="3"/>
<text x="10.2" y="121.8" font-family="Liberation Sans" font-weight="bold" font-size="11.8" fill="#fff" filter="url(#ts)">Олена Кілко</text></g></g>
<clipPath id="c4"><rect x="0" y="0" width="236" height="133" rx="12"/></clipPath>
<g transform="translate(1355,294)"><g clip-path="url(#c4)"><rect width="236" height="133" fill="#0b0b0b"/>
<path d="M108,133 C112,112 125,102 148,102 C175,102 195,112 205,133Z" fill="#85857c" filter="url(#b2)"/>
<ellipse cx="147" cy="82" rx="14" ry="18" fill="#2e2a26" filter="url(#b2)"/>
<circle cx="142" cy="76" r="1.3" fill="#9ae0a0"/><circle cx="152" cy="76" r="1.3" fill="#9ae0a0"/>
<path d="M140,110 C145,114 152,114 158,110" stroke="#aaa" stroke-width="2" fill="none" filter="url(#b1)"/>
<g transform="translate(215.8,19.9)"><circle r="11.8" fill="#3c3f42" fill-opacity=".95"/>
<g fill="none" stroke="#e0e2e0" stroke-width="1.4"><rect x="-2.3" y="-7.6" width="4.6" height="7.6" rx="2.3" fill="#e0e2e0" stroke="none"/><path d="M-5,-1.2 C-5,5 5,5 5,-1.2"/><path d="M0,3.8 V7.2" stroke-width="2.2"/><path d="M-7,-6.6 L6.6,6.8" stroke="#3c3f42" stroke-width="3"/><path d="M-6.4,-5.9 L6.3,6.5" stroke-width="1.4"/></g></g><text x="10.2" y="121.8" font-family="Liberation Sans" font-weight="bold" font-size="11.8" fill="#fff" filter="url(#ts)">Альона Сезоненко</text></g></g>
<clipPath id="c5"><rect x="0" y="0" width="236" height="133" rx="12"/></clipPath>
<g transform="translate(1603,294)"><g clip-path="url(#c5)"><rect width="236" height="133" fill="#2f78d6"/>
<rect width="236" height="133" fill="url(#g6)"/>
<g fill="#dfe8f2" filter="url(#b4)"><ellipse cx="15" cy="22" rx="28" ry="22"/><ellipse cx="62" cy="18" rx="22" ry="14"/><ellipse cx="125" cy="18" rx="40" ry="16"/><ellipse cx="8" cy="55" rx="16" ry="12"/><ellipse cx="58" cy="50" rx="24" ry="10"/><ellipse cx="95" cy="35" rx="20" ry="10"/></g>
<path d="M0,95 C30,75 60,82 90,86 C120,88 160,60 236,12 V133 H0Z" fill="#f2d22a" filter="url(#b2)"/>
<path d="M0,92 C30,72 60,80 90,84 C120,86 160,58 236,10" fill="none" stroke="#3070d0" stroke-width="3" filter="url(#b1)"/>
<path d="M150,55 C180,40 236,20 236,20 V133 H160Z" fill="#d9a83a" filter="url(#b4)"/>
<g stroke="#b8782a" stroke-width="2.5" fill="none" opacity=".6" filter="url(#b1)"><path d="M215,133 C212,100 222,60 236,30"/><path d="M195,133 C200,105 208,80 220,55"/></g>
<path d="M62,133 C70,104 86,90 112,86 L132,86 C165,92 185,110 192,133Z" fill="#141414" filter="url(#b2)"/>
<ellipse cx="120" cy="54" rx="28" ry="32" fill="#2c2c2a" filter="url(#b2)"/>
<path d="M96,62 C96,44 104,36 120,36 C136,36 144,46 144,62 C144,84 134,98 120,98 C106,98 96,84 96,62Z" fill="#b4b4ac" filter="url(#b1)"/>
<path d="M92,60 C88,36 100,24 120,24 C140,24 150,38 146,60 C140,44 130,40 120,40 C108,40 98,46 92,60Z" fill="#2c2c2a" filter="url(#b1)"/>
<g transform="translate(215.8,19.9)"><circle r="11.8" fill="#3c3f42" fill-opacity=".95"/>
<g fill="none" stroke="#e0e2e0" stroke-width="1.4"><rect x="-2.3" y="-7.6" width="4.6" height="7.6" rx="2.3" fill="#e0e2e0" stroke="none"/><path d="M-5,-1.2 C-5,5 5,5 5,-1.2"/><path d="M0,3.8 V7.2" stroke-width="2.2"/><path d="M-7,-6.6 L6.6,6.8" stroke="#3c3f42" stroke-width="3"/><path d="M-6.4,-5.9 L6.3,6.5" stroke-width="1.4"/></g></g><text x="10.2" y="121.8" font-family="Liberation Sans" font-weight="bold" font-size="11.8" fill="#fff" filter="url(#ts)">Анна Тертична</text></g></g>
<clipPath id="c6"><rect x="0" y="0" width="236" height="133" rx="12"/></clipPath>
<g transform="translate(1355,439)"><g clip-path="url(#c6)"><rect width="236" height="133" fill="#c5bfa6"/>
<rect x="0" y="0" width="64" height="133" fill="#cfe2d0" filter="url(#b1)"/>
<g fill="#a07878" opacity=".55" filter="url(#b1)"><ellipse cx="20" cy="30" rx="8" ry="14"/><ellipse cx="50" cy="45" rx="8" ry="14"/><ellipse cx="18" cy="80" rx="8" ry="14"/><ellipse cx="50" cy="95" rx="8" ry="14"/><ellipse cx="20" cy="125" rx="8" ry="12"/></g>
<rect x="64" y="0" width="30" height="133" fill="#b8b090" filter="url(#b2)"/>
<rect x="190" y="0" width="46" height="133" fill="#c8c0a0" filter="url(#b2)"/>
<g fill="#4a7238" filter="url(#b1)"><path d="M86,28 C92,18 100,10 108,2 C104,14 100,22 92,30Z"/><path d="M96,30 C104,20 114,14 124,8 C118,20 110,28 100,32Z"/><path d="M104,30 L108,0 L114,28Z"/><path d="M110,32 C116,22 126,20 132,22 C126,28 118,32 112,34Z"/><path d="M136,20 C142,10 150,4 160,2 C154,12 146,20 138,24Z"/><path d="M150,24 C156,16 166,12 176,14 C168,22 160,26 152,28Z"/><path d="M140,4 C146,0 154,0 160,4 C152,8 146,8 140,4Z"/></g>
<g filter="url(#b1)" opacity=".7"><rect x="102" y="22" width="14" height="10" fill="#5a6a50"/><rect x="132" y="20" width="16" height="10" fill="#a07060"/></g>
<g filter="url(#b1)"><rect x="140" y="22" width="10" height="12" fill="#f0ece0"/><rect x="108" y="34" width="14" height="18" fill="#e8e0d0"/><rect x="98" y="38" width="10" height="14" fill="#40a0c8"/><rect x="76" y="40" width="10" height="14" fill="#506070"/></g>
<rect x="70" y="35" width="40" height="22" fill="#d4d4c4" filter="url(#b1)"/>
<rect x="72" y="57" width="110" height="3" fill="#8a6a50"/>
<g filter="url(#b1)"><ellipse cx="168" cy="62" rx="12" ry="9" fill="#e8f0f0"/><rect x="162" y="70" width="14" height="30" fill="#50b0d8"/><rect x="182" y="65" width="5" height="27" fill="#60b8e0" transform="rotate(-15 184 78)"/></g>
<ellipse cx="132" cy="75" rx="30" ry="40" fill="#4a1f30" filter="url(#b2)"/>
<path d="M72,133 C78,110 96,98 118,96 H148 C168,100 180,115 184,133Z" fill="#6a5c80" filter="url(#b2)"/>
<path d="M118,133 V100 C124,96 140,96 146,100 V133Z" fill="#8c1a34" filter="url(#b1)"/>
<path d="M114,72 C114,58 122,52 133,52 C144,52 152,58 152,72 C152,88 144,96 133,96 C122,96 114,88 114,72Z" fill="#d7c1c2" filter="url(#b1)"/>
<path d="M108,66 C108,44 118,36 134,36 C150,36 158,46 156,66 C150,54 140,50 128,52 C118,54 112,58 108,66Z" fill="#4a1f30" filter="url(#b1)"/>
<g transform="translate(215.8,19.9)"><circle r="11.8" fill="#3c3f42" fill-opacity=".95"/>
<g fill="none" stroke="#e0e2e0" stroke-width="1.4"><rect x="-2.3" y="-7.6" width="4.6" height="7.6" rx="2.3" fill="#e0e2e0" stroke="none"/><path d="M-5,-1.2 C-5,5 5,5 5,-1.2"/><path d="M0,3.8 V7.2" stroke-width="2.2"/><path d="M-7,-6.6 L6.6,6.8" stroke="#3c3f42" stroke-width="3"/><path d="M-6.4,-5.9 L6.3,6.5" stroke-width="1.4"/></g></g><text x="10.2" y="121.8" font-family="Liberation Sans" font-weight="bold" font-size="11.8" fill="#fff" filter="url(#ts)">Iryna Ogneva</text></g></g>
<clipPath id="c7"><rect x="0" y="0" width="236" height="133" rx="12"/></clipPath>
<g transform="translate(1603,439)"><g clip-path="url(#c7)"><rect width="236" height="133" fill="#b6bcae"/>
<rect width="236" height="133" fill="url(#g8)"/>
<rect x="0" y="0" width="26" height="133" fill="#2c2a24" filter="url(#b2)"/>
<rect x="24" y="0" width="58" height="133" fill="#6b3f2d" filter="url(#b2)"/>
<ellipse cx="40" cy="25" rx="10" ry="14" fill="#c8b8a8" opacity=".7" filter="url(#b4)"/>
<rect x="82" y="0" width="40" height="133" fill="#b7b7a8" filter="url(#b2)"/>
<ellipse cx="200" cy="70" rx="40" ry="50" fill="#d0d2c4" filter="url(#b4)"/>
<path d="M40,133 C48,106 70,92 104,86 L135,84 C152,92 160,110 165,133Z" fill="#7790a2" filter="url(#b2)"/>
<ellipse cx="90" cy="52" rx="37" ry="40" fill="#5c3d2b" filter="url(#b2)"/>
<path d="M60,62 C58,46 70,38 90,38 C110,38 118,50 116,66 C114,88 104,102 90,102 C74,102 62,86 60,62Z" fill="#b8927f" filter="url(#b1)"/>
<path d="M54,70 C48,36 62,12 92,12 C120,12 132,32 126,62 C118,46 104,40 86,42 C70,46 60,54 54,70Z" fill="#5c3d2b" filter="url(#b1)"/>
<path d="M8,108 C20,90 50,82 78,82 C86,86 84,96 76,100 C60,104 40,112 20,115Z" fill="#b8927f" filter="url(#b1)"/>
<g transform="translate(215.8,19.9)"><circle r="11.8" fill="#3c3f42" fill-opacity=".95"/>
<g fill="none" stroke="#e0e2e0" stroke-width="1.4"><rect x="-2.3" y="-7.6" width="4.6" height="7.6" rx="2.3" fill="#e0e2e0" stroke="none"/><path d="M-5,-1.2 C-5,5 5,5 5,-1.2"/><path d="M0,3.8 V7.2" stroke-width="2.2"/><path d="M-7,-6.6 L6.6,6.8" stroke="#3c3f42" stroke-width="3"/><path d="M-6.4,-5.9 L6.3,6.5" stroke-width="1.4"/></g></g><text x="10.2" y="121.8" font-family="Liberation Sans" font-weight="bold" font-size="11.8" fill="#fff" filter="url(#ts)">Світлана Зуєва</text></g></g>
<clipPath id="c8"><rect x="0" y="0" width="236" height="133" rx="12"/></clipPath>
<g transform="translate(1355,584)"><g clip-path="url(#c8)"><rect width="236" height="133" fill="#333436"/>
<circle cx="101.7" cy="57" r="19.8" fill="#7c919c"/>
<circle cx="137.9" cy="57" r="21.8" fill="#333436"/>
<circle cx="137.9" cy="57" r="19.8" fill="#c2185b"/>
<text x="101.7" y="64" font-family="Liberation Sans" font-size="20" fill="#fff" text-anchor="middle">M</text>
<text x="137.9" y="64" font-family="Liberation Sans" font-size="20" fill="#fff" text-anchor="middle">O</text>
<text x="118.5" y="94.8" font-family="Liberation Sans" font-weight="bold" font-size="12" fill="#e8eaed" text-anchor="middle">Ще 64 особи</text></g></g>
<clipPath id="c9"><rect x="0" y="0" width="236" height="133" rx="12"/></clipPath>
<g transform="translate(1603,584)"><g clip-path="url(#c9)"><rect width="236" height="133" fill="#dfcdb0"/>
<rect width="236" height="133" fill="url(#g10)"/>
<g fill="#cdb590" opacity=".35"><rect x="18" y="0" width="1" height="133"/><rect x="40" y="0" width="1" height="133"/><rect x="63" y="0" width="1" height="133"/><rect x="88" y="0" width="1" height="133"/><rect x="112" y="0" width="1" height="133"/><rect x="135" y="0" width="1" height="133"/></g>
<rect x="144.7" y="0" width="8" height="133" fill="#ebe8e2" filter="url(#b1)"/>
<rect x="152.6" y="0" width="22.5" height="133" fill="#d3cec6" filter="url(#b1)"/>
<rect x="175" y="0" width="61" height="133" fill="#d6b587" filter="url(#b1)"/>
<rect x="228" y="0" width="8" height="133" fill="#e2cfb2"/>
<rect x="175" y="19" width="53" height="3" fill="#efe0c4"/><rect x="175" y="67" width="53" height="3" fill="#efe0c4"/><rect x="175" y="106.5" width="53" height="3" fill="#efe0c4"/>
<g filter="url(#b1)"><rect x="191" y="47" width="5" height="20" fill="#f2f0ea"/><rect x="196" y="43" width="3" height="24" fill="#2f5a50"/><rect x="199" y="46" width="3" height="21" fill="#e6ddd0"/><rect x="202" y="45" width="2" height="22" fill="#506868"/><rect x="194" y="83" width="9" height="24" fill="#f4f0e8"/><rect x="203" y="85" width="3" height="22" fill="#506060"/></g>
<rect x="0" y="101.6" width="70" height="14" fill="#ead9bc" filter="url(#b1)"/>
<path d="M29,59.5 L53,59.5 L55.6,82 H26Z" fill="#f3efe8" filter="url(#b1)"/>
<path d="M39,82 C35,92 35,102 41,106 H47 C53,102 53,92 49,82Z" fill="#e8cdb0" filter="url(#b1)"/>
<circle cx="185" cy="96" r="2.5" fill="#f0c060" opacity=".8"/>
<path d="M62,133 C60,104 62,62 72,40 C84,18 100,14 120,14 C146,14 162,30 168,54 C176,84 176,112 180,133Z" fill="#dacfbd" filter="url(#b2)"/>
<path d="M86,40 C90,24 104,16 120,16 C140,16 150,26 154,40 C146,30 134,26 120,26 C104,26 94,32 86,40Z" fill="#c8b89e" filter="url(#b2)"/>
<path d="M88,66 C86,44 98,33 117,33 C136,33 148,44 146,66 C145,92 134,108 117,108 C100,108 90,92 88,66Z" fill="#d3ad9e" filter="url(#b1)"/>
<g fill="none" stroke="#707078" stroke-width="1.3"><rect x="90" y="58" width="24" height="11" rx="3"/><rect x="121" y="58" width="24" height="11" rx="3"/></g>
<g fill="#dfe8e8" opacity=".5"><rect x="94" y="60" width="16" height="6" rx="2"/><rect x="125" y="60" width="16" height="6" rx="2"/></g>
<path d="M95,133 C104,124 170,122 186,133Z" fill="#2a3a5a"/>
<g transform="translate(215.8,19.9)"><circle r="11.8" fill="#3c3f42" fill-opacity=".95"/>
<g fill="none" stroke="#e0e2e0" stroke-width="1.4"><rect x="-2.3" y="-7.6" width="4.6" height="7.6" rx="2.3" fill="#e0e2e0" stroke="none"/><path d="M-5,-1.2 C-5,5 5,5 5,-1.2"/><path d="M0,3.8 V7.2" stroke-width="2.2"/><path d="M-7,-6.6 L6.6,6.8" stroke="#3c3f42" stroke-width="3"/><path d="M-6.4,-5.9 L6.3,6.5" stroke-width="1.4"/></g></g>
<g transform="translate(220,118)"><circle r="12" fill="#202124" fill-opacity=".9"/><rect x="-6.5" y="-5.5" width="13" height="11" rx="1.5" fill="none" stroke="#fff" stroke-width="1.4"/><path d="M-4.2,-0.5 V-3.2 H-1 M4.2,0.5 V3.2 H1" fill="none" stroke="#fff" stroke-width="1.6"/></g>
<text x="10.2" y="121.8" font-family="Liberation Sans" font-weight="bold" font-size="11.4" fill="#fff" filter="url(#ts)">Ольга Вячеславівна Усачова</text></g></g>
</svg><!--/TILES-->
</body></html>
